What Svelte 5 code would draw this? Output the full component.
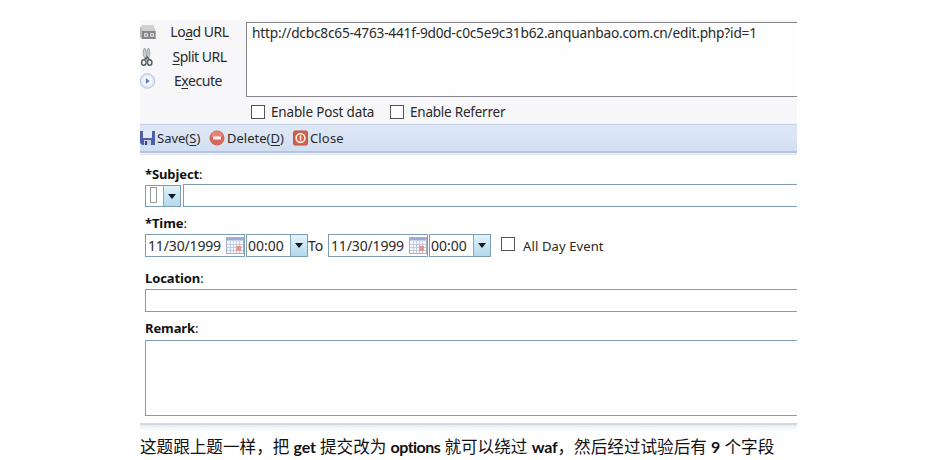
<script>
  let url = $state('http://dcbc8c65-4763-441f-9d0d-c0c5e9c31b62.anquanbao.com.cn/edit.php?id=1');
  const dates = [
    { day: '11/30/1999', hour: '00:00' },
    { day: '11/30/1999', hour: '00:00' }
  ];
</script>

{#snippet calendar()}
  <svg class="cal" width="18" height="17" viewBox="0 0 18 17">
    <rect x=".5" y=".5" width="17" height="16" fill="#f4f6fc" stroke="#a9b0c0" />
    <rect x="1" y="1" width="16" height="2.500" fill="#9dabd6" />
    <path d="M1 7.500H17M1 10.500H17M1 13.500H17M4.500 4V16M7.500 4V16M10.500 4V16M13.500 4V16" stroke="#c0c8dc" stroke-width=".9" />
    <rect x="10" y="9" width="5" height="5" fill="#e0998f" />
  </svg>
{/snippet}

{#snippet arrow()}
  <span class="arrow"><svg width="8" height="5" viewBox="0 0 8 5"><path d="M0 0H8L4 5Z" fill="#111820" /></svg></span>
{/snippet}

<main>
  <section class="hackbar">
    <div class="actions">
      <div class="action">
        <svg width="16" height="16" viewBox="0 0 16 16">
          <path d="M0 3L3 1H13L15.500 7V15H2L0 13Z" fill="#b9b9b9" />
          <path d="M0 3L3 1H13L15 7H3Z" fill="#d0d0d0" />
          <path d="M2 7H15.500V15H2Z" fill="#858585" />
          <rect x="4" y="9" width="4" height="4" rx="1" fill="#ddd" />
          <rect x="10" y="9" width="4" height="4" rx="1" fill="#ddd" />
          <path d="M5 11H7M11 11H13" stroke="#666" />
        </svg>
        <span>Lo<u>a</u>d URL</span>
      </div>
      <div class="action">
        <svg viewBox="0 0 14 20" class="scissors">
          <path d="M5.500 13C3 9 2.500 4 4.500 1C6.500 3 6.800 8 6.500 13ZM7 13C6.500 8 6.500 3 8.500 1C10.500 4 10 9 8 13Z" fill="#c5d0d0" stroke="#8b9696" stroke-width=".8" />
          <path d="M5 12L7 10L9 12" fill="none" stroke="#555e63" stroke-width="1.500" />
          <ellipse cx="3.800" cy="15.500" rx="2.200" ry="2.800" fill="none" stroke="#565f65" stroke-width="1.500" />
          <ellipse cx="9.700" cy="15.500" rx="2.200" ry="2.800" fill="none" stroke="#565f65" stroke-width="1.500" />
        </svg>
        <span><u>S</u>plit URL</span>
      </div>
      <div class="action">
        <svg width="16" height="16" viewBox="0 0 16 16">
          <circle cx="7.500" cy="8" r="7.300" fill="#dce6f5" stroke="#b5c5df" />
          <circle cx="7.500" cy="8" r="5" fill="#f5f9ff" />
          <path d="M5.800 5L9.800 8L5.800 11Z" fill="#5b82bb" />
        </svg>
        <span class="exec">E<u>x</u>ecute</span>
      </div>
    </div>
    <div class="request">
      <div class="url">{url}</div>
      <div class="options">
        <i class="box"></i><span class="post">Enable Post data</span>
        <i class="box"></i><span class="ref">Enable Referrer</span>
      </div>
    </div>
  </section>

  <nav>
    <svg width="15" height="16" viewBox="0 0 15 16">
      <path d="M0 1H15V15H2L0 13Z" fill="#4e5fa8" />
      <rect x="3" y="1" width="9" height="7" fill="#e4e9f6" />
      <rect x="4" y="10" width="7" height="5" fill="#c8cfe5" />
      <rect x="5" y="11" width="2" height="4" fill="#34437f" />
    </svg>
    <span class="save">Save(<u>S</u>)</span>
    <svg width="16" height="16" viewBox="0 0 16 16">
      <circle cx="8" cy="8" r="7.500" fill="#d7665b" />
      <ellipse cx="8" cy="5" rx="5.500" ry="3.800" fill="#e58478" />
      <rect x="4" y="6.500" width="8" height="3" rx=".5" fill="#fff1ed" />
    </svg>
    <span class="delete">Delete(<u>D</u>)</span>
    <svg width="15" height="16" viewBox="0 0 15 16">
      <rect x=".5" y="1" width="14" height="14" rx="1.500" fill="#cf6049" stroke="#bb5542" />
      <circle cx="7.500" cy="8" r="4.400" fill="none" stroke="#ffe9df" stroke-width="1.600" />
      <path d="M7.500 5.500V10.500" stroke="#ffe9df" stroke-width="1.700" />
    </svg>
    <span class="close">Close</span>
  </nav>

  <form>
    <div class="label subject"><b>*Subject</b>:</div>
    <div class="row">
      <div class="select"><span class="blank"><i></i></span>{@render arrow()}</div>
      <div class="field"></div>
    </div>
    <div class="label time"><b>*Time</b>:</div>
    <div class="row times">
      {#each dates as d, i}
        {#if i}<span class="to">To</span>{/if}
        <div class="date"><span>{d.day}</span>{@render calendar()}</div>
        <div class="hour"><span>{d.hour}</span>{@render arrow()}</div>
      {/each}
      <i class="box all"></i><span class="allday">All Day Event</span>
    </div>
    <div class="label location"><b>Location</b>:</div>
    <div class="field loc"></div>
    <div class="label remark"><b>Remark</b>:</div>
    <div class="field area"></div>
  </form>
  <div class="band"></div>
  <p>这题跟上题一样，把 <b>get</b> 提交改为 <b class="wide">options</b> 就可以绕过 <b>waf</b>，然后经过试验后有 <b>9</b> 个字段</p>
</main>

<style>
  :global(body) { margin: 0; background: #fff; }
  main {
    box-sizing: border-box;
    width: 657px;
    height: 460px;
    margin-left: 140px;
    padding-top: 20px;
    overflow: hidden;
    font: 14px/20px "Noto Sans", "Open Sans", sans-serif;
    color: #292929;
    white-space: nowrap;
  }
  svg { display: block; flex: none; }
  u { text-underline-offset: 2px; text-decoration-thickness: 1px; text-decoration-skip-ink: none; }
  .hackbar { display: flex; height: 104px; background: #f7f7fa; }
  .actions { width: 106px; }
  .action { display: flex; align-items: center; height: 24.500px; letter-spacing: -.48px; }
  .action svg { width: 16px; }
  .action .scissors { width: 14px; height: 20px; margin-right: 2px; }
  .action span { flex: 1; text-align: center; margin-left: 14px; margin-right: 17px; }
  .action .exec { margin-left: 11px; letter-spacing: -.45px; }
  .request { flex: 1; padding-top: 2px; }
  .url {
    box-sizing: border-box;
    height: 75px;
    padding: 0 5px;
    border: 1px solid #85858a;
    border-right: 0;
    background: #fefefe;
    font-size: 13.700px;
    letter-spacing: -.21px;
  }
  .options { display: flex; align-items: center; height: 27px; padding: 1px 0 0 5px; font-size: 13.500px; letter-spacing: -.16px; }
  .box { box-sizing: border-box; width: 14px; height: 14px; border: 1px solid #555; background: #fff; flex: none; }
  .options span { margin-left: 6px; }
  .options .ref { letter-spacing: -.23px; }
  .post { width: 119px; }
  nav {
    box-sizing: border-box;
    display: flex;
    align-items: center;
    height: 31px;
    padding-bottom: 3px;
    border-top: 1px solid #c5d0e2;
    border-bottom: 1px solid #dfe4f5;
    background: linear-gradient(#dfe8f6, #d2dff2 90%, #b6c3dc 91%, #b6c3dc 95%, #f0f3fc 96%);
    font-size: 13px;
  }
  nav span { margin-left: 2px; }
  .save { width: 52px; }
  nav .delete { width: 66px; }
  .close { letter-spacing: .15px; }
  form { padding-left: 5px; height: 268px; box-sizing: border-box; }
  .label { font: 13px/18px "Noto Sans", sans-serif; color: #111; letter-spacing: -.1px; }
  .subject { padding-top: 10px; height: 19px; }
  .row { display: flex; height: 23px; }
  .select, .date, .hour, .field { box-sizing: border-box; border: 1px solid #7e9cb2; background: #fff; height: 23px; }
  .select { display: flex; width: 36px; height: 22px; margin: 1px 2px 0 0; }
  .blank { width: 17px; padding: 1px 0 0 4px; box-sizing: border-box; }
  .blank i { box-sizing: border-box; display: block; width: 7px; height: 16px; border: 1px solid #999; }
  .arrow { flex: 1; display: flex; align-items: center; justify-content: center; border-left: 1px solid #86aabd; background: linear-gradient(#e2f3fa, #b2d9ec); }
  .field { flex: 1; border-right: 0; }
  .time { padding-top: 7px; height: 20px; }
  .date { display: flex; align-items: center; width: 100px; padding-left: 2px; letter-spacing: -.15px; }
  .date span { width: 78px; }
  .hour { display: flex; width: 62px; line-height: 21px; margin-left: 1px; }
  .hour span:first-child { width: 43px; padding-left: 1px; box-sizing: border-box; }
  .to { width: 20px; line-height: 24px; }
  .all { margin: 3px 8px 0 10px; }
  .allday { line-height: 24px; font-size: 13px; letter-spacing: .12px; }
  .location { padding-top: 12px; height: 20px; }
  .remark { padding-top: 7px; height: 21px; }
  .area { height: 76px; }
  .band { height: 7px; border-top: 2px solid #d1d8df; background: linear-gradient(#e9eef6, #f8faff); box-sizing: border-box; }
  p { margin: 6px 0 0; color: #111; font: 16.600px/22px Lato, "Noto Sans CJK SC", sans-serif; }
  p b { font-weight: 700; font-size: 16px; font-variant-ligatures: none; letter-spacing: -.2px; }
  p .wide { letter-spacing: -.55px; }
</style>
